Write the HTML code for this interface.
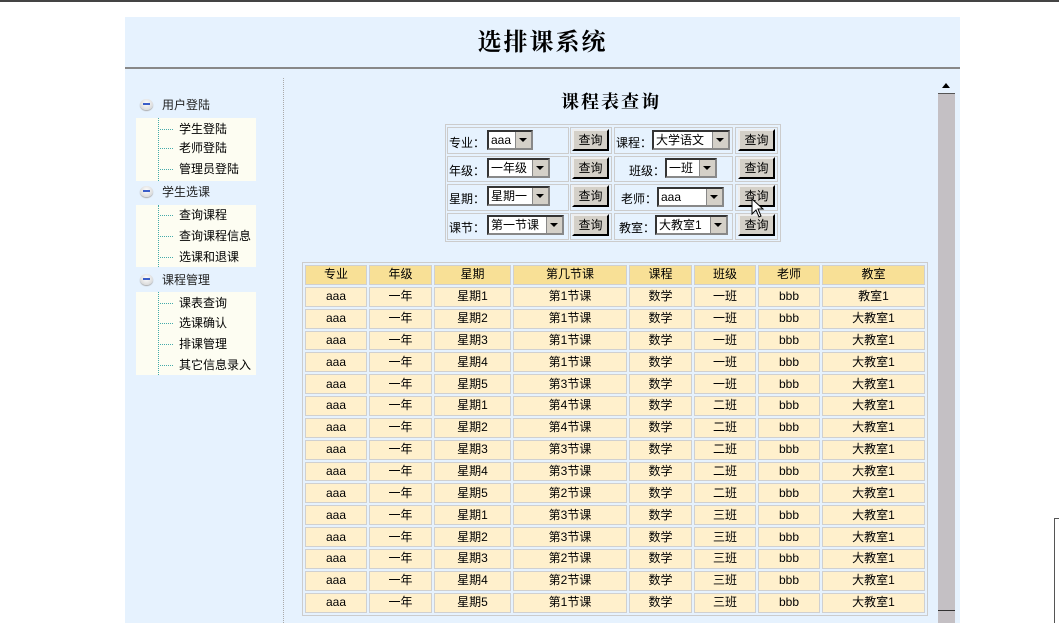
<!DOCTYPE html>
<html><head><meta charset="utf-8"><style>
*{margin:0;padding:0;box-sizing:border-box}
body{width:1059px;height:623px;overflow:hidden;background:#fff;position:relative;font-family:"Liberation Sans","WenQuanYi Zen Hei","Noto Sans CJK SC",sans-serif;font-size:12px;color:#000}
.a{position:absolute}
.top{left:0;top:0;width:1059px;height:2px;background:#444}
.hdr{left:125px;top:17px;width:835px;height:52px;background:#e6f2fe;border-bottom:2px solid #888}
.main{left:125px;top:69px;width:835px;height:554px;background:#e6f2fe}
.title{left:125px;top:22px;width:835px;text-align:center;font-size:24px;font-weight:bold;letter-spacing:2px;font-family:"Noto Serif CJK SC","Liberation Serif",serif}
.vline{left:283px;top:78px;height:545px;border-left:1px dotted #aaa}
.gh{font-size:12px;color:#222}
.ic{width:13px;height:11px;border-radius:50%;background:radial-gradient(circle at 50% 40%,#fff,#ccc);box-shadow:0 1px 1px #aaa}
.ic:after{content:"";position:absolute;left:3px;top:4px;width:7px;height:2px;background:#3a5dc8}
.box{left:136px;width:120px;background:#fdfdf2}
.tl{left:158px;border-left:1px dotted #4aa}
.it{left:160px;font-size:12px}
.it:before{content:"";display:inline-block;width:13px;border-top:1px dotted #4aa;vertical-align:middle;margin-right:6px}
.sub{left:284px;top:88px;width:654px;text-align:center;font-size:18px;font-weight:bold;letter-spacing:2px;font-family:"Noto Serif CJK SC","Liberation Serif",serif}
.fo{left:445px;top:124px;width:336px;height:118px;border:1px solid #ccc}
.fc{border:1px solid #ccc}
.sel{height:20px;background:#fff;border:2px inset #888;font-size:12px;line-height:16px;padding-left:2px;overflow:hidden}
.sel:after{content:"";position:absolute;right:0;top:0;width:15px;height:16px;background:#d4d0c8;border-left:1px solid #888}
.arr{position:absolute;right:4px;top:6px;width:0;height:0;border-left:4px solid transparent;border-right:4px solid transparent;border-top:4px solid #000;z-index:2}
.btn{width:37px;height:22px;background:#d4d0c8;border:2px outset #eee;border-right-color:#555;border-bottom-color:#555;text-align:center;line-height:18px;font-size:12px}
.lb{font-size:12px}
.tb{left:302px;top:262px;border:1px solid #ccc;border-spacing:2px;table-layout:fixed;width:624px}
.tb td{height:19.85px;border:1px solid #d0d0d0;background:#fff0cc;text-align:center;font-size:12px;padding:0;line-height:17px}
.tb tr.h td{background:#f8e096}
.sb{left:938px;top:78px;width:17px;height:545px;background:#c4c0c4}
.sbb{left:938px;top:78px;width:17px;height:16px;background:#e6f2fe;border-bottom:1px solid #555}
</style></head><body>
<div class="a top"></div>
<div class="a hdr"></div>
<div class="a main"></div>
<div class="a title">选排课系统</div>
<div class="a vline"></div>

<div class="a ic" style="left:140px;top:99px"></div><div class="a gh" style="left:162px;top:96px">用户登陆</div>
<div class="a box" style="top:118px;height:63px"></div>
<div class="a tl" style="top:118px;height:63px"></div>
<div class="a it" style="top:120px">学生登陆</div>
<div class="a it" style="top:139px">老师登陆</div>
<div class="a it" style="top:160px">管理员登陆</div>

<div class="a ic" style="left:140px;top:186px"></div><div class="a gh" style="left:162px;top:183px">学生选课</div>
<div class="a box" style="top:205px;height:62px"></div>
<div class="a tl" style="top:205px;height:62px"></div>
<div class="a it" style="top:206px">查询课程</div>
<div class="a it" style="top:227px">查询课程信息</div>
<div class="a it" style="top:248px">选课和退课</div>

<div class="a ic" style="left:140px;top:274px"></div><div class="a gh" style="left:162px;top:271px">课程管理</div>
<div class="a box" style="top:292px;height:83px"></div>
<div class="a tl" style="top:292px;height:83px"></div>
<div class="a it" style="top:294px">课表查询</div>
<div class="a it" style="top:314px">选课确认</div>
<div class="a it" style="top:335px">排课管理</div>
<div class="a it" style="top:356px">其它信息录入</div>

<div class="a sub">课程表查询</div>

<div class="a fo"></div>
<div class="a fc" style="left:447px;top:127px;width:122px;height:27px"></div>
<div class="a fc" style="left:570px;top:127px;width:42px;height:27px"></div>
<div class="a fc" style="left:614px;top:127px;width:119px;height:27px"></div>
<div class="a fc" style="left:735px;top:127px;width:43px;height:27px"></div>
<div class="a fc" style="left:447px;top:156px;width:122px;height:26px"></div>
<div class="a fc" style="left:570px;top:156px;width:42px;height:26px"></div>
<div class="a fc" style="left:614px;top:156px;width:119px;height:26px"></div>
<div class="a fc" style="left:735px;top:156px;width:43px;height:26px"></div>
<div class="a fc" style="left:447px;top:184px;width:122px;height:27px"></div>
<div class="a fc" style="left:570px;top:184px;width:42px;height:27px"></div>
<div class="a fc" style="left:614px;top:184px;width:119px;height:27px"></div>
<div class="a fc" style="left:735px;top:184px;width:43px;height:27px"></div>
<div class="a fc" style="left:447px;top:213px;width:122px;height:27px"></div>
<div class="a fc" style="left:570px;top:213px;width:42px;height:27px"></div>
<div class="a fc" style="left:614px;top:213px;width:119px;height:27px"></div>
<div class="a fc" style="left:735px;top:213px;width:43px;height:27px"></div>

<div class="a lb" style="left:449px;top:134px">专业：</div>
<div class="a sel" style="left:487px;top:130px;width:46px">aaa<span class="arr"></span></div>
<div class="a lb" style="left:616px;top:134px">课程：</div>
<div class="a sel" style="left:652px;top:130px;width:78px">大学语文<span class="arr"></span></div>
<div class="a lb" style="left:449px;top:162px">年级：</div>
<div class="a sel" style="left:487px;top:158px;width:63px">一年级<span class="arr"></span></div>
<div class="a lb" style="left:629px;top:162px">班级：</div>
<div class="a sel" style="left:665px;top:158px;width:52px">一班<span class="arr"></span></div>
<div class="a lb" style="left:449px;top:190px">星期：</div>
<div class="a sel" style="left:487px;top:186px;width:63px">星期一<span class="arr"></span></div>
<div class="a lb" style="left:621px;top:190px">老师：</div>
<div class="a sel" style="left:657px;top:187px;width:67px">aaa<span class="arr"></span></div>
<div class="a lb" style="left:449px;top:219px">课节：</div>
<div class="a sel" style="left:487px;top:215px;width:77px">第一节课<span class="arr"></span></div>
<div class="a lb" style="left:619px;top:219px">教室：</div>
<div class="a sel" style="left:655px;top:215px;width:73px">大教室1<span class="arr"></span></div>

<div class="a btn" style="left:572px;top:129px">查询</div>
<div class="a btn" style="left:738px;top:129px">查询</div>
<div class="a btn" style="left:572px;top:157px">查询</div>
<div class="a btn" style="left:738px;top:157px">查询</div>
<div class="a btn" style="left:572px;top:185px">查询</div>
<div class="a btn" style="left:738px;top:185px">查询</div>
<div class="a btn" style="left:572px;top:214px">查询</div>
<div class="a btn" style="left:738px;top:214px">查询</div>
<svg class="a" style="left:751px;top:198px" width="16" height="22" viewBox="0 0 16 22"><path d="M1 1 L1 16 L5 12 L8 19 L10 18 L7 11 L12 11 Z" fill="#fff" stroke="#000" stroke-width="1"/></svg>

<table class="a tb">
<colgroup><col style="width:62px"><col style="width:63px"><col style="width:77px"><col style="width:114px"><col style="width:63px"><col style="width:62px"><col style="width:62px"><col style="width:103px"></colgroup>
<tr class="h"><td>专业</td><td>年级</td><td>星期</td><td>第几节课</td><td>课程</td><td>班级</td><td>老师</td><td>教室</td></tr>
<tr><td>aaa</td><td>一年</td><td>星期1</td><td>第1节课</td><td>数学</td><td>一班</td><td>bbb</td><td>教室1</td></tr>
<tr><td>aaa</td><td>一年</td><td>星期2</td><td>第1节课</td><td>数学</td><td>一班</td><td>bbb</td><td>大教室1</td></tr>
<tr><td>aaa</td><td>一年</td><td>星期3</td><td>第1节课</td><td>数学</td><td>一班</td><td>bbb</td><td>大教室1</td></tr>
<tr><td>aaa</td><td>一年</td><td>星期4</td><td>第1节课</td><td>数学</td><td>一班</td><td>bbb</td><td>大教室1</td></tr>
<tr><td>aaa</td><td>一年</td><td>星期5</td><td>第3节课</td><td>数学</td><td>一班</td><td>bbb</td><td>大教室1</td></tr>
<tr><td>aaa</td><td>一年</td><td>星期1</td><td>第4节课</td><td>数学</td><td>二班</td><td>bbb</td><td>大教室1</td></tr>
<tr><td>aaa</td><td>一年</td><td>星期2</td><td>第4节课</td><td>数学</td><td>二班</td><td>bbb</td><td>大教室1</td></tr>
<tr><td>aaa</td><td>一年</td><td>星期3</td><td>第3节课</td><td>数学</td><td>二班</td><td>bbb</td><td>大教室1</td></tr>
<tr><td>aaa</td><td>一年</td><td>星期4</td><td>第3节课</td><td>数学</td><td>二班</td><td>bbb</td><td>大教室1</td></tr>
<tr><td>aaa</td><td>一年</td><td>星期5</td><td>第2节课</td><td>数学</td><td>二班</td><td>bbb</td><td>大教室1</td></tr>
<tr><td>aaa</td><td>一年</td><td>星期1</td><td>第3节课</td><td>数学</td><td>三班</td><td>bbb</td><td>大教室1</td></tr>
<tr><td>aaa</td><td>一年</td><td>星期2</td><td>第3节课</td><td>数学</td><td>三班</td><td>bbb</td><td>大教室1</td></tr>
<tr><td>aaa</td><td>一年</td><td>星期3</td><td>第2节课</td><td>数学</td><td>三班</td><td>bbb</td><td>大教室1</td></tr>
<tr><td>aaa</td><td>一年</td><td>星期4</td><td>第2节课</td><td>数学</td><td>三班</td><td>bbb</td><td>大教室1</td></tr>
<tr><td>aaa</td><td>一年</td><td>星期5</td><td>第1节课</td><td>数学</td><td>三班</td><td>bbb</td><td>大教室1</td></tr>
</table>

<div class="a sb"></div>
<div class="a sbb"></div>
<div class="a" style="left:942px;top:83px;width:0;height:0;border-left:4px solid transparent;border-right:4px solid transparent;border-bottom:5px solid #000"></div>
<div class="a" style="left:938px;top:610px;width:17px;height:1px;background:#333"></div>
<div class="a" style="left:1054px;top:518px;width:1px;height:105px;background:#555"></div>
<div class="a" style="left:1054px;top:518px;width:5px;height:1px;background:#555"></div>
</body></html>
